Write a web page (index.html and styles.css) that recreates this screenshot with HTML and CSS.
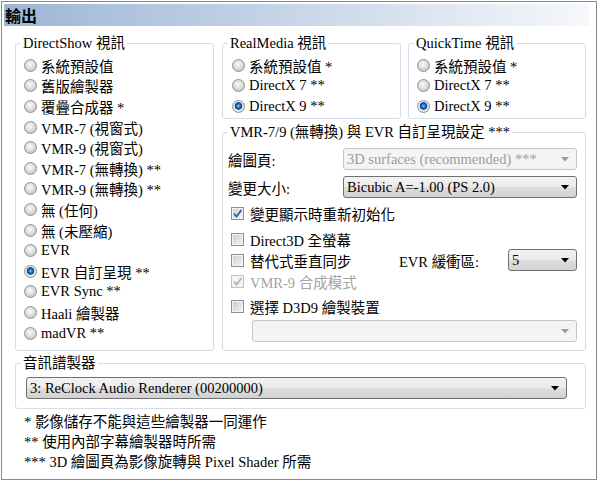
FILE: index.html
```html
<!DOCTYPE html>
<html lang="zh-Hant">
<head>
  <meta charset="UTF-8">
  <title>輸出</title>
  <link rel="stylesheet" href="styles.css">
</head>
<body>
  <div class="dlg">
    <div class="title">輸出</div>

    <div class="main">
      <fieldset class="grp ds">
        <legend>DirectShow 視訊</legend>
        <div class="opts">
          <label class="opt"><input type="radio" name="ds">系統預設值</label>
          <label class="opt"><input type="radio" name="ds">舊版繪製器</label>
          <label class="opt"><input type="radio" name="ds">覆疊合成器 *</label>
          <label class="opt"><input type="radio" name="ds">VMR-7 (視窗式)</label>
          <label class="opt"><input type="radio" name="ds">VMR-9 (視窗式)</label>
          <label class="opt"><input type="radio" name="ds">VMR-7 (無轉換) **</label>
          <label class="opt"><input type="radio" name="ds">VMR-9 (無轉換) **</label>
          <label class="opt"><input type="radio" name="ds">無 (任何)</label>
          <label class="opt"><input type="radio" name="ds">無 (未壓縮)</label>
          <label class="opt"><input type="radio" name="ds">EVR</label>
          <label class="opt"><input type="radio" name="ds" checked>EVR 自訂呈現 **</label>
          <label class="opt"><input type="radio" name="ds">EVR Sync **</label>
          <label class="opt"><input type="radio" name="ds">Haali 繪製器</label>
          <label class="opt"><input type="radio" name="ds">madVR **</label>
        </div>
      </fieldset>

      <div class="right">
        <div class="toprow">
          <fieldset class="grp rm">
            <legend>RealMedia 視訊</legend>
            <div class="opts">
              <label class="opt"><input type="radio" name="rm">系統預設值 *</label>
              <label class="opt"><input type="radio" name="rm">DirectX 7 **</label>
              <label class="opt"><input type="radio" name="rm" checked>DirectX 9 **</label>
            </div>
          </fieldset>
          <fieldset class="grp qt">
            <legend>QuickTime 視訊</legend>
            <div class="opts">
              <label class="opt"><input type="radio" name="qt">系統預設值 *</label>
              <label class="opt"><input type="radio" name="qt">DirectX 7 **</label>
              <label class="opt"><input type="radio" name="qt" checked>DirectX 9 **</label>
            </div>
          </fieldset>
        </div>

        <fieldset class="grp vmr">
          <legend>VMR-7/9 (無轉換) 與 EVR 自訂呈現設定 ***</legend>
          <div class="vbody">
            <div class="frow">
              <span class="flabel">繪圖頁:</span>
              <div class="combo off"><span>3D surfaces (recommended) ***</span><svg class="arr" width="8" height="5"><path d="M0 0H8L4 4.5Z"/></svg></div>
            </div>
            <div class="frow r2">
              <span class="flabel">變更大小:</span>
              <div class="combo"><span>Bicubic A=-1.00 (PS 2.0)</span><svg class="arr" width="8" height="5"><path d="M0 0H8L4 4.5Z"/></svg></div>
            </div>
            <div class="crow c1">
              <span class="cb on"><svg width="11" height="11"><path d="M2 5.5L4.5 8.5L9.5 2"/></svg></span>變更顯示時重新初始化
            </div>
            <div class="crow c2">
              <span class="cb"></span>Direct3D 全螢幕
            </div>
            <div class="crow c3">
              <span class="cpart"><span class="cb"></span>替代式垂直同步</span>
              <span>EVR 緩衝區:</span>
              <div class="combo small"><span>5</span><svg class="arr" width="8" height="5"><path d="M0 0H8L4 4.5Z"/></svg></div>
            </div>
            <div class="crow c4 dim">
              <span class="cb on off"><svg width="11" height="11"><path d="M2 5.5L4.5 8.5L9.5 2"/></svg></span>VMR-9 合成模式
            </div>
            <div class="crow c5">
              <span class="cb"></span>選擇 D3D9 繪製裝置
            </div>
            <div class="combo off dev"><span></span><svg class="arr" width="8" height="5"><path d="M0 0H8L4 4.5Z"/></svg></div>
          </div>
        </fieldset>
      </div>
    </div>

    <fieldset class="grp audio">
      <legend>音訊譜製器</legend>
      <div class="abody">
        <div class="combo"><span>3: ReClock Audio Renderer (00200000)</span><svg class="arr" width="8" height="5"><path d="M0 0H8L4 4.5Z"/></svg></div>
      </div>
    </fieldset>

    <div class="notes">
      <div>* 影像儲存不能與這些繪製器一同運作</div>
      <div>** 使用內部字幕繪製器時所需</div>
      <div>*** 3D 繪圖頁為影像旋轉與 Pixel Shader 所需</div>
    </div>
  </div>
</body>
</html>
```

FILE: styles.css
```css
body {
  margin: 0;
  background: #fff;
  color: #000;
  font-family: "Liberation Serif", "Noto Sans CJK TC", serif;
  font-size: 14.5px;
}

.dlg {
  box-sizing: border-box;
  width: 596px;
  height: 479px;
  margin: 1px;
  border: 1px solid #8a8a8a;
}

.title {
  height: 22px;
  margin: 2px 7px 0 2px;
  padding-left: 1px;
  line-height: 22px;
  font-family: "Noto Sans CJK TC", sans-serif;
  font-weight: bold;
  font-size: 16px;
  background: linear-gradient(to right, #9db6d5, #c8d6e8 50%, #f6f8fb);
}

.main {
  display: grid;
  grid-template-columns: 199px 364px;
  column-gap: 8px;
  margin: 9px 0 0 13px;
}

/* group boxes */
.grp {
  box-sizing: border-box;
  min-width: 0;
  margin: 0;
  padding: 0;
  border: 1px solid #d5dde6;
  border-radius: 3px;
}
.grp legend {
  height: 16px;
  margin-left: 5px;
  padding: 0 2px;
  line-height: 16px;
  white-space: nowrap;
}

.right {
  display: flex;
  flex-direction: column;
  gap: 5px;
}
.toprow {
  display: flex;
  gap: 7px;
}
.rm { width: 179px; height: 84px; }
.qt { width: 178px; height: 84px; }
.vmr { height: 227px; }

/* radio lists */
.opts {
  padding: 4px 0 0 8px;
}
.rm .opts { padding-left: 9px; }
.opt {
  display: flex;
  align-items: center;
  height: 20.6px;
  white-space: nowrap;
}
.opt input {
  appearance: none;
  box-sizing: border-box;
  width: 13px;
  height: 13px;
  margin: 0 4px 0 0;
  border: 1px solid #8d9092;
  border-radius: 50%;
  background: radial-gradient(circle at 45% 40%, #fafafa 0, #e6e6e6 3px, #cdcdcd 6px);
}
.opt input:checked {
  background: radial-gradient(circle at 50% 45%, #a9dcf8 0, #2c86d6 1.3px, #0c3f8e 3.4px, #f2f2f2 4.2px, #dadada 6px);
}

/* vmr settings */
.vbody {
  padding: 8px 8px 0 5px;
}
.frow {
  display: flex;
  align-items: center;
  height: 22px;
}
.frow.r2 { margin-top: 6px; }
.flabel {
  width: 115px;
  flex: none;
}
.frow .combo { flex: 1; }

.crow {
  display: flex;
  align-items: center;
  height: 20px;
  padding-left: 3px;
  white-space: nowrap;
}
.crow.c1 { margin-top: 5px; }
.crow.c2 { margin-top: 6px; }
.crow.c3 { height: 22px; }
.crow.c5 { margin-top: 5px; }
.crow.dim { color: #a3a3a3; }
.cpart {
  display: flex;
  align-items: center;
  width: 168px;
}
.combo.small {
  width: 69px;
  margin-left: auto;
}

.cb {
  box-sizing: border-box;
  display: inline-flex;
  align-items: center;
  justify-content: center;
  width: 13px;
  height: 13px;
  margin-right: 6px;
  border: 1px solid #8e8f8f;
  background: linear-gradient(135deg, #cbcbcb, #f5f5f5);
  box-shadow: inset 0 0 0 1px #f4f4f4;
}
.cb svg path {
  fill: none;
  stroke: #2c5fb3;
  stroke-width: 1.8;
}
.cb.off {
  border-color: #c2c2c2;
  background: #f4f4f4;
}
.cb.off svg path { stroke: #b4b4b4; }

/* drop-down boxes */
.combo {
  box-sizing: border-box;
  display: flex;
  align-items: center;
  height: 22px;
  padding: 0 7px 0 3px;
  border: 1px solid #707070;
  border-radius: 3px;
  background: linear-gradient(#f3f3f3, #ebebeb 50%, #dedede 51%, #d2d2d2);
  white-space: nowrap;
}
.combo span { flex: 1; }
.combo .arr { flex: none; fill: #000; }
.combo.off {
  border-color: #c5c5c5;
  background: #f4f4f4;
  color: #9d9d9d;
}
.combo.off .arr { fill: #9a9a9a; }
.combo.dev {
  margin: 4px 0 0 24px;
}

/* audio */
.audio {
  width: 571px;
  margin: 4px 0 0 13px;
}
.abody {
  padding: 6px 18px 9px 10px;
}

.notes {
  margin-top: 3px;
  padding-left: 22px;
  line-height: 20px;
}
```
